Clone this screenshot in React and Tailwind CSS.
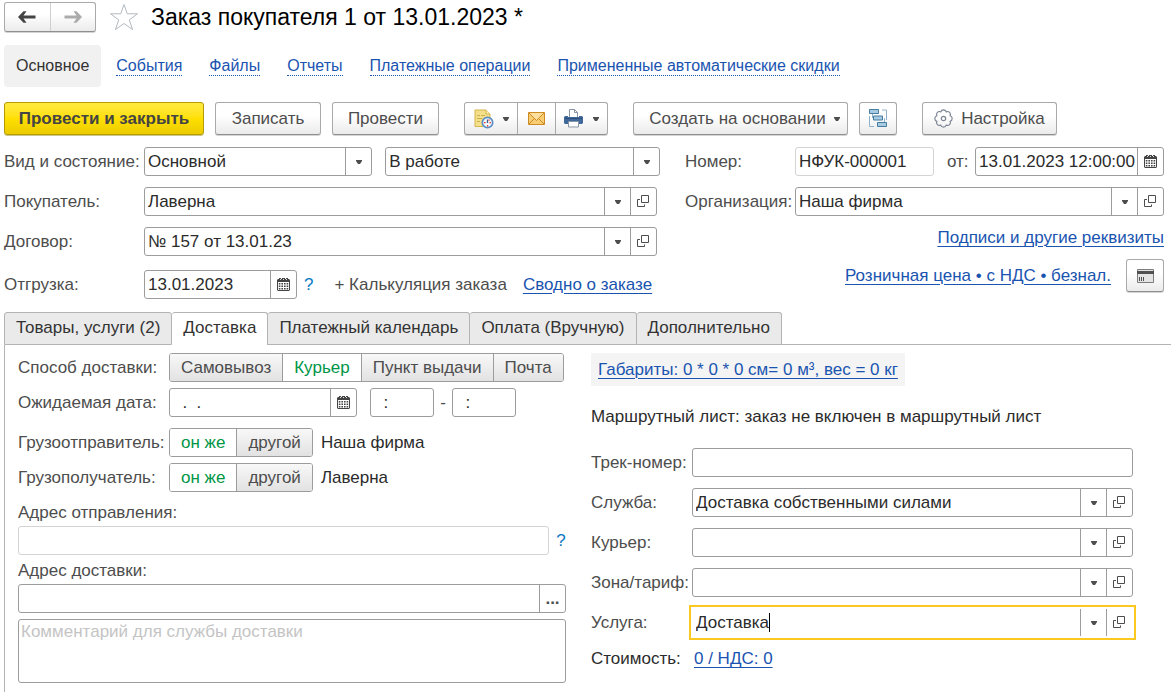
import React from 'react';

const btn = 'flex items-center justify-center border border-[#a9a9a9] border-b-[#8f8f8f] rounded-[3px] bg-linear-to-b from-white from-40% to-[#ebebeb] text-[#4d4d4d] shadow-[0_1px_0_#d4d4d4]';
const box = 'flex h-[29px] bg-white border border-[#9c9c9c] rounded-[3px] text-[#2b2b2b]';
const cell = 'w-[26px] shrink-0 flex items-center justify-center border-l border-[#9c9c9c] text-[#4d4d4d]';
const link = 'text-[#1a54b0] underline decoration-1 underline-offset-[3px]';

function Caret() {
  return (
    <svg width="6" height="4" viewBox="0 0 6 4" fill="currentColor" className="shrink-0" aria-hidden="true">
      <path d="M0 0h6v1L4 4H2L0 1z" />
    </svg>
  );
}

function OpenIcon() {
  return (
    <svg width="13" height="13" viewBox="0 0 13 13" fill="none" stroke="#4d4d4d" aria-hidden="true">
      <path d="M4.500 0.500h7v7h-7z" />
      <path d="M3 4.500H0.500v7h7V9.500" />
    </svg>
  );
}

function CalendarIcon() {
  return (
    <svg width="13" height="13" viewBox="0 0 13 13" aria-hidden="true">
      <path d="M1 1h1V0h2v1h1V0h3v1h1V0h2v1h1l1 1v10l-1 1H1l-1-1V2z" fill="#444" />
      <path d="M1 4h11v8H1z" fill="#fff" />
      <path d="M3 1h1v1H3zM6 1h1v1H6zM9 1h1v1H9z" fill="#ddd" />
      <path d="M1.800 5.700h9.800M1.800 8.200h9.800M1.800 10.700h9.800" stroke="#444" strokeWidth="1.400" strokeDasharray="1.600 1" />
    </svg>
  );
}

function Arrow({ flip, color }) {
  return (
    <svg width="18" height="12" viewBox="0 0 18 12" className={flip ? 'rotate-180' : ''} aria-hidden="true">
      <path d="M0 6L5.500 0.300H8.500L5.500 4.600H17.500v2.800H5.500L8.500 11.700H5.500z" fill={color} />
    </svg>
  );
}

function StarIcon() {
  return (
    <svg width="30" height="28" viewBox="0 0 30 28" fill="none" stroke="#b4babf" aria-hidden="true">
      <path d="M15 1.500l3.300 9.300h10.200l-8.200 6 3.200 9.700-8.500-6-8.500 6 3.200-9.700-8.200-6h10.200z" />
    </svg>
  );
}

function NoteClockIcon() {
  return (
    <svg width="20" height="20" viewBox="0 0 20 20" aria-hidden="true">
      <path d="M1 1h11l4 4v12.500H1z" fill="#f4df8b" stroke="#d3b54a" />
      <path d="M12 1v4h4" fill="#fff3bf" stroke="#d3b54a" />
      <path d="M3 6.500h3M7 6.500h4M3 9.500h5M3 12.500h3" stroke="#cdb04c" />
      <circle cx="13.500" cy="13.500" r="5.200" fill="#f4f8fc" stroke="#5d8fc4" strokeWidth="1.700" />
      <path d="M13.500 14V10.500" stroke="#335f92" strokeWidth="1.300" />
      <path d="M10 13h1.500v1.200H10zM15.500 13H17v1.200h-1.500zM13 16h1.200v1.500H13zM14.500 10.500h1.200v1.200h-1.200z" fill="#e23b2e" />
    </svg>
  );
}

function MailIcon() {
  return (
    <svg width="17" height="13" viewBox="0 0 17 13" fill="none" aria-hidden="true">
      <path d="M0.500 0.500h16v12h-16z" fill="#f9cd74" stroke="#cf8a22" />
      <path d="M1 12l5.500-5.500M16 12l-5.500-5.500" stroke="#cf8a22" />
      <path d="M1 1l7.500 7.500L16 1" fill="#fde0a0" stroke="#cf8a22" />
    </svg>
  );
}

function PrinterIcon() {
  return (
    <svg width="19" height="19" viewBox="0 0 19 19" aria-hidden="true">
      <path d="M5.500 8V0.500h5l3 3V8" fill="#fff" stroke="#8795a5" />
      <path d="M10.500 0.500v3h3" fill="none" stroke="#8795a5" />
      <path d="M1 7h3v1h11V7h3l1 1v6l-1 1H1l-1-1V8z" fill="#41689a" />
      <path d="M1 9h17v1H1z" fill="#2c4f7c" />
      <path d="M4.500 12.500h10v5.500h-10z" fill="#fff" stroke="#8795a5" />
    </svg>
  );
}

function StructureIcon() {
  return (
    <svg width="19" height="19" viewBox="0 0 19 19" fill="none" aria-hidden="true">
      <path d="M13 1h4.500v10M5 17.500H0.500V7M3.500 5v4M15 9.500h0.500v4" stroke="#8fb0c9" />
      <path d="M0.500 0.500h9v4h-9zM4.500 7h9v4h-9zM8.500 13.500h9v4h-9z" fill="#a9cbe2" stroke="#447da3" />
    </svg>
  );
}

function GearIcon() {
  return (
    <svg width="19" height="19" viewBox="0 0 19 19" fill="none" stroke="#7d8594" strokeWidth="1.200" className="shrink-0" aria-hidden="true">
      <path d="M6.740 2.850A2.900 2.900 0 0 1 12.260 2.850A2.900 2.900 0 0 1 16.150 6.740A2.900 2.900 0 0 1 16.150 12.260A2.900 2.900 0 0 1 12.260 16.150A2.900 2.900 0 0 1 6.740 16.150A2.900 2.900 0 0 1 2.850 12.260A2.900 2.900 0 0 1 2.850 6.740A2.900 2.900 0 0 1 6.740 2.850z" />
      <circle cx="9.500" cy="9.500" r="2.200" />
    </svg>
  );
}

function CardIcon() {
  return (
    <svg width="17" height="14" viewBox="0 0 17 14" aria-hidden="true">
      <path d="M0.500 0.500h16v13h-16z" fill="#e4e4e4" stroke="#7c7c7c" />
      <path d="M0 2h17v3H0z" fill="#505050" />
      <path d="M2.500 8v4M4.500 8v4M6.500 8v4" stroke="#505050" />
    </svg>
  );
}

// Drop-down field, optionally with the button that opens the chosen record
function SelectField({ id, value, open, className = '' }) {
  return (
    <div className={`${box} ${className}`}>
      <div className="relative flex-1 flex min-w-0">
        <select id={id} className="flex-1 min-w-0 appearance-none bg-transparent pl-[3px] pr-7 outline-none">
          <option>{value}</option>
        </select>
        <span className={`${cell} absolute inset-y-0 right-0 pointer-events-none`}><Caret /></span>
      </div>
      {open && <button type="button" aria-label="Открыть" className={cell}><OpenIcon /></button>}
    </div>
  );
}

function DateField({ id, value, className = '' }) {
  return (
    <div className={`${box} ${className}`}>
      <input id={id} defaultValue={value} className="flex-1 min-w-0 pl-[3px] outline-none" />
      <button type="button" aria-label="Календарь" className={cell}><CalendarIcon /></button>
    </div>
  );
}

function Segmented({ items, active }) {
  return (
    <div className="flex h-[29px] rounded-[3px] border border-[#9c9c9c] overflow-hidden divide-x divide-[#9c9c9c]">
      {items.map((item) => (
        <button
          key={item}
          type="button"
          className={`px-[11px] whitespace-nowrap ${item === active ? 'bg-white text-[#009646]' : 'bg-linear-to-b from-[#f8f8f8] to-[#e2e2e2] text-[#4d4d4d]'}`}
        >
          {item}
        </button>
      ))}
    </div>
  );
}

function Header() {
  return (
    <header className="flex items-center h-[30px]">
      <div className="flex h-[30px] w-[92px] rounded-[3px] border border-[#a9a9a9] border-b-[#8f8f8f] shadow-[0_1px_0_#d4d4d4] bg-linear-to-b from-white from-40% to-[#ebebeb] divide-x divide-[#cfcfcf]">
        <button type="button" aria-label="Назад" className="flex-1 flex items-center justify-center"><Arrow color="#444" /></button>
        <button type="button" aria-label="Вперед" className="flex-1 flex items-center justify-center"><Arrow flip color="#ababab" /></button>
      </div>
      <button type="button" aria-label="Избранное" className="ml-[13px]"><StarIcon /></button>
      <h1 className="ml-3 text-[23px] text-black whitespace-nowrap">Заказ покупателя 1 от 13.01.2023 *</h1>
    </header>
  );
}

function SectionNav() {
  const items = ['События', 'Файлы', 'Отчеты', 'Платежные операции', 'Примененные автоматические скидки'];
  return (
    <nav className="mt-[13px] flex items-center text-[16px] whitespace-nowrap">
      <a href="#main" className="flex items-center h-[42px] px-3 mr-[15px] rounded-[4px] bg-[#f1f1f1] text-[#333]">Основное</a>
      <div className="flex gap-[27px]">
        {items.map((item) => (
          <a key={item} href="#section" className="text-[#1a54b0] leading-[18px] border-b border-dotted border-[#1a54b0]">{item}</a>
        ))}
      </div>
    </nav>
  );
}

function Toolbar() {
  return (
    <div className="mt-[15px] flex h-[33px] whitespace-nowrap">
      <button type="button" className="w-[200px] rounded-[3px] border border-[#b39b00] bg-linear-to-b from-[#ffea3d] via-[#ffe000] to-[#ebcb00] shadow-[0_1px_0_#cfc68a] font-bold text-[#444]">
        Провести и закрыть
      </button>
      <button type="button" className={`${btn} ml-[11px] w-[106px]`}>Записать</button>
      <button type="button" className={`${btn} ml-[11px] w-[107px]`}>Провести</button>
      <div className={`${btn} ml-[25px] w-[144px] divide-x divide-[#a9a9a9]`}>
        <button type="button" aria-label="Напоминание" className="w-[53px] h-full flex items-center justify-center gap-[9px]"><NoteClockIcon /><Caret /></button>
        <button type="button" aria-label="Письмо" className="w-[38px] h-full flex items-center justify-center"><MailIcon /></button>
        <button type="button" aria-label="Печать" className="flex-1 h-full flex items-center justify-center gap-[10px]"><PrinterIcon /><Caret /></button>
      </div>
      <button type="button" className={`${btn} ml-[25px] w-[215px] gap-2 pl-2`}>Создать на основании <Caret /></button>
      <button type="button" aria-label="Структура" className={`${btn} ml-[11px] w-[38px]`}><StructureIcon /></button>
      <button type="button" className={`${btn} ml-[25px] w-[135px] gap-2`}><GearIcon />Настройка</button>
    </div>
  );
}

function OrderForm() {
  const label = 'w-[140px] shrink-0 whitespace-nowrap';
  return (
    <div className="mt-[12px] grid grid-cols-[minmax(0,656fr)_minmax(0,479fr)] gap-[25px]">
      <div className="flex flex-col gap-[11px]">
        <div className="flex items-center">
          <label htmlFor="kind" className={label}>Вид и состояние:</label>
          <SelectField id="kind" value="Основной" className="flex-[228] min-w-0" />
          <SelectField id="state" value="В работе" className="ml-[13px] flex-[275] min-w-0" />
        </div>
        <div className="flex items-center mr-[3px]">
          <label htmlFor="buyer" className={label}>Покупатель:</label>
          <SelectField id="buyer" value="Лаверна" open className="flex-1" />
        </div>
        <div className="flex items-center mr-[3px]">
          <label htmlFor="contract" className={label}>Договор:</label>
          <SelectField id="contract" value="№ 157 от 13.01.23" open className="flex-1" />
        </div>
        <div className="mt-[3px] flex items-center whitespace-nowrap">
          <label htmlFor="shipment" className={label}>Отгрузка:</label>
          <DateField id="shipment" value="13.01.2023" className="w-[153px]" />
          <button type="button" className="ml-[7px] text-[#0a78c2]">?</button>
          <button type="button" className="ml-[21px]">+ Калькуляция заказа</button>
          <a href="#summary" className={`${link} ml-4`}>Сводно о заказе</a>
        </div>
      </div>
      <div className="flex flex-col">
        <div className="flex items-center">
          <label htmlFor="number" className="w-[110px] shrink-0">Номер:</label>
          <input id="number" defaultValue="НФУК-000001" readOnly className="w-[139px] shrink-0 h-[29px] px-[3px] border border-[#d4d4d4] rounded-[3px] text-[#2b2b2b] outline-none" />
          <label htmlFor="date" className="ml-[13px] w-7 shrink-0">от:</label>
          <DateField id="date" value="13.01.2023 12:00:00" className="flex-1 min-w-0" />
        </div>
        <div className="mt-[11px] flex items-center">
          <label htmlFor="company" className="w-[110px] shrink-0">Организация:</label>
          <SelectField id="company" value="Наша фирма" open className="flex-1 min-w-0" />
        </div>
        <a href="#signatures" className={`${link} mt-[10px] self-end leading-6`}>Подписи и другие реквизиты</a>
        <div className="mt-[9px] flex items-center justify-end gap-[15px]">
          <a href="#prices" className={link}>Розничная цена • с НДС • безнал.</a>
          <button type="button" aria-label="Карта" className={`${btn} w-[38px] h-[33px]`}><CardIcon /></button>
        </div>
      </div>
    </div>
  );
}

function Tabs() {
  const tabs = ['Товары, услуги (2)', 'Доставка', 'Платежный календарь', 'Оплата (Вручную)', 'Дополнительно'];
  return (
    <div role="tablist" className="mt-[13px] flex h-[33px] whitespace-nowrap">
      {tabs.map((tab, i) => (
        <button
          key={tab}
          type="button"
          role="tab"
          aria-selected={i === 1}
          className={`px-[11px] pb-[2px] border-t border-r border-[#b3b3b3] rounded-t-[3px] text-[#333] first:border-l ${i === 1 ? 'bg-white' : 'bg-[#eaeaea] border-b'}`}
        >
          {tab}
        </button>
      ))}
      <div className="flex-1 border-b border-[#b3b3b3]" />
    </div>
  );
}

function DeliveryLeft() {
  const label = 'w-[151px] shrink-0 whitespace-nowrap';
  return (
    <div className="flex flex-col">
      <div className="flex items-center">
        <span className={label}>Способ доставки:</span>
        <Segmented items={['Самовывоз', 'Курьер', 'Пункт выдачи', 'Почта']} active="Курьер" />
      </div>
      <div className="mt-[6px] flex items-center">
        <label htmlFor="expected" className={label}>Ожидаемая дата:</label>
        <DateField id="expected" value="  .  ." className="w-[188px]" />
        <input aria-label="Время с" defaultValue="  :" className={`${box} ml-[13px] w-16 px-[3px] outline-none`} />
        <span className="w-[18px] text-center">-</span>
        <input aria-label="Время по" defaultValue="  :" className={`${box} w-16 px-[3px] outline-none`} />
      </div>
      <div className="mt-[11px] flex items-center">
        <span className={label}>Грузоотправитель:</span>
        <Segmented items={['он же', 'другой']} active="он же" />
        <span className="ml-2 text-[#2b2b2b]">Наша фирма</span>
      </div>
      <div className="mt-[6px] flex items-center">
        <span className={label}>Грузополучатель:</span>
        <Segmented items={['он же', 'другой']} active="он же" />
        <span className="ml-2 text-[#2b2b2b]">Лаверна</span>
      </div>
      <label htmlFor="from" className="mt-[9px] leading-6">Адрес отправления:</label>
      <div className="mt-px flex items-center">
        <input id="from" readOnly className="flex-1 min-w-0 h-[29px] px-[3px] border border-[#d4d4d4] rounded-[3px] outline-none" />
        <button type="button" className="w-[17px] pl-[7px] text-[#0a78c2]">?</button>
      </div>
      <label htmlFor="to" className="mt-1 leading-6">Адрес доставки:</label>
      <div className={`${box} mt-px`}>
        <input id="to" className="flex-1 min-w-0 px-[3px] outline-none" />
        <button type="button" className={`${cell} font-bold`}>...</button>
      </div>
      <textarea
        aria-label="Комментарий"
        placeholder="Комментарий для службы доставки"
        className="mt-[6px] h-16 px-[2px] leading-6 resize-none border border-[#9c9c9c] rounded-[3px] outline-none placeholder:text-[#c4c4c4]"
      />
    </div>
  );
}

function DeliveryRight() {
  const label = 'w-[101px] shrink-0 whitespace-nowrap';
  return (
    <div className="flex flex-col">
      <div className="self-start h-[33px] px-[7px] flex items-center bg-[#f4f4f4]">
        <a href="#dimensions" className={link}>Габариты: 0 * 0 * 0 см= 0 м³, вес = 0 кг</a>
      </div>
      <p className="mt-[19px] leading-6 text-[#2b2b2b]">Маршрутный лист: заказ не включен в маршрутный лист</p>
      <div className="mt-[19px] flex flex-col gap-[11px]">
        <div className="flex items-center">
          <label htmlFor="track" className={label}>Трек-номер:</label>
          <input id="track" className={`${box} flex-1 min-w-0 px-[3px] outline-none`} />
        </div>
        <div className="flex items-center">
          <label htmlFor="service" className={label}>Служба:</label>
          <SelectField id="service" value="Доставка собственными силами" open className="flex-1 min-w-0" />
        </div>
        <div className="flex items-center">
          <label htmlFor="courier" className={label}>Курьер:</label>
          <SelectField id="courier" value="" open className="flex-1 min-w-0" />
        </div>
        <div className="flex items-center">
          <label htmlFor="zone" className={label}>Зона/тариф:</label>
          <SelectField id="zone" value="" open className="flex-1 min-w-0" />
        </div>
        <div className="flex items-center">
          <label htmlFor="item" className={label}>Услуга:</label>
          <div className="flex-1 min-w-0 flex h-[29px] p-px outline-2 outline-offset-1 outline-[#fac81e] text-[#2b2b2b]">
            <div className="flex-1 min-w-0 flex items-center">
              <input id="item" defaultValue="Доставка" className="field-sizing-content pl-[3px] outline-none" />
              <span className="w-px h-[19px] bg-black" />
            </div>
            <button type="button" aria-label="Выбрать" className={cell}><Caret /></button>
            <button type="button" aria-label="Открыть" className={cell}><OpenIcon /></button>
          </div>
        </div>
      </div>
      <div className="mt-[10px] flex items-center leading-6 text-[#2b2b2b]">
        <span className="w-[103px]">Стоимость:</span>
        <a href="#cost" className={link}>0 / НДС: 0</a>
      </div>
    </div>
  );
}

export default function App() {
  return (
    <main className="min-h-screen bg-white pt-[2px] pl-1 text-[17px] leading-[20px] text-[#4d4d4d] font-['Liberation_Sans',Arial,sans-serif]">
      <div className="pr-[7px]">
        <Header />
        <SectionNav />
        <Toolbar />
        <OrderForm />
      </div>
      <Tabs />
      <section className="border-l border-[#b3b3b3] pt-2 pl-[13px] pr-[38px] pb-[9px] grid grid-cols-[minmax(0,548fr)_minmax(0,542fr)] gap-[25px]">
        <DeliveryLeft />
        <DeliveryRight />
      </section>
    </main>
  );
}
